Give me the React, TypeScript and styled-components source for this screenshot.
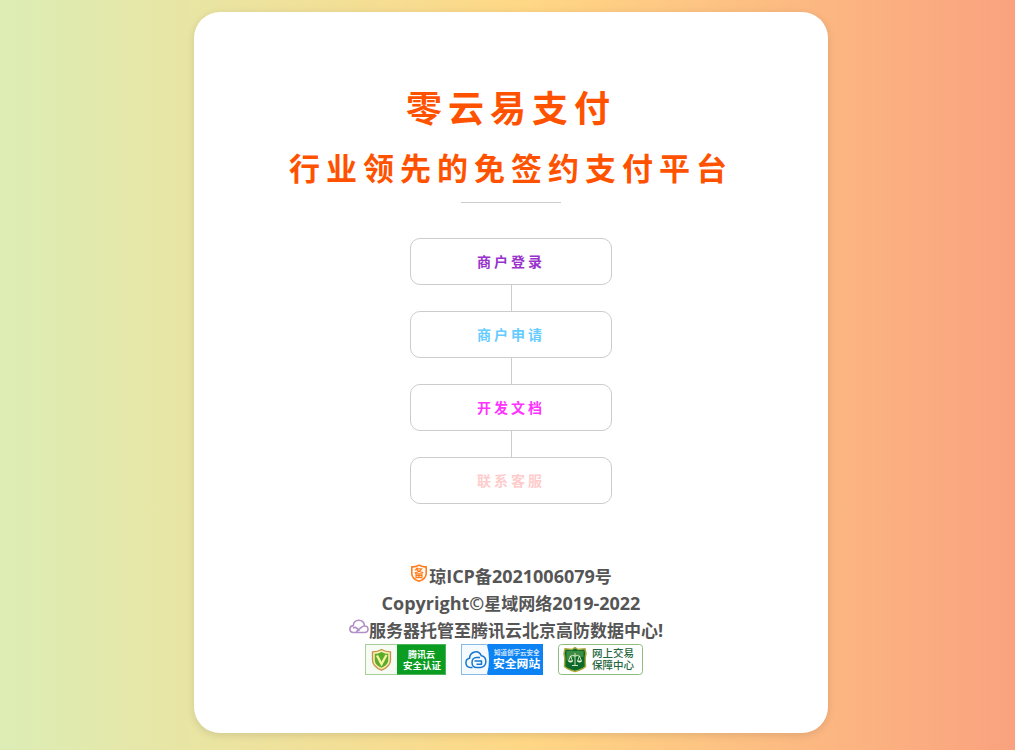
import React from "react";
import styled, { createGlobalStyle } from "styled-components";

const GlobalStyle = createGlobalStyle`
  * { box-sizing: border-box; }
  body {
    margin: 0;
    font-family: "Open Sans", "Noto Sans CJK SC", sans-serif;
    color: #555;
  }
`;

const Page = styled.div`
  min-height: 100vh;
  display: flex;
  justify-content: center;
  align-items: flex-start;
  padding: 12px 0 17px 7px;
  background: linear-gradient(to right, #dcedb5, #ffd785 52%, #faa27f);
`;

const Card = styled.main`
  width: 62.9%;
  padding: 70px 20px 58px;
  display: flex;
  flex-direction: column;
  align-items: center;
  background: #fff;
  border-radius: 26px;
  box-shadow: 0 2px 8px rgba(0, 0, 0, 0.12);
`;

const Title = styled.h1`
  margin: 0;
  font-size: 36px;
  line-height: 54px;
  letter-spacing: 6px;
  color: #ff5200;
`;

const Subtitle = styled.h2`
  margin: 8px 0 0;
  font-size: 31px;
  line-height: 48px;
  letter-spacing: 6px;
  color: #ff5200;
  white-space: nowrap;
`;

const Rule = styled.hr`
  width: 100px;
  height: 1px;
  margin: 10px 0 35px;
  border: 0;
  background: #ccc;
`;

const Menu = styled.nav`
  display: flex;
  flex-direction: column;
  align-items: center;
`;

const Connector = styled.span`
  width: 1px;
  height: 26px;
  background: #ccc;
`;

const MenuLink = styled.a<{ $color: string }>`
  width: 202px;
  display: block;
  padding: 12px 0;
  border: 1px solid #ccc;
  border-radius: 10px;
  color: ${(p) => p.$color};
  font-size: 14px;
  font-weight: 700;
  line-height: 21px;
  letter-spacing: 3px;
  text-align: center;
  text-decoration: none;
`;

const Footer = styled.footer`
  margin-top: 59px;
  display: flex;
  flex-direction: column;
  align-items: center;
  font-size: 17px;
  font-weight: 700;
  line-height: 27px;
`;

const Line = styled.div<{ $trail?: number }>`
  height: 27px;
  display: flex;
  padding-right: ${(p) => p.$trail ?? 0}px;
  white-space: nowrap;

  a { color: inherit; text-decoration: none; }
`;

const Latin = styled.span`
  font-size: 18px;
`;

const Badges = styled.div`
  display: flex;
`;

const Badge = styled.a`
  display: block;
  height: 31px;
  margin-right: 15px;
  svg { display: block; }
`;

const badgeFont = "'Liberation Sans', 'Noto Sans CJK SC', sans-serif";

const items = [
  { label: "商户登录", color: "#9932cc" },
  { label: "商户申请", color: "#66ccff" },
  { label: "开发文档", color: "#ff33ff" },
  { label: "联系客服", color: "#ffcccc" },
];

const FilingIcon = () => (
  <svg width="19" height="21" viewBox="0 -1 19 21" aria-hidden="true">
    <path d="M9 1.200C7 2.700 4.400 3 1.800 2.800V9.500c0 3.800 2.800 6.200 7.200 7.800 4.400-1.600 7.200-4 7.200-7.800V2.800C13.600 3 11 2.700 9 1.200Z" fill="#fff" stroke="#ff7d1a" strokeWidth="1.600" strokeLinejoin="round" />
    <path d="M7.500 3.700 5 6.300M7 4.800H11.800C10.500 7 8 8.200 4.600 8.800M6.500 5.700C8 7.400 10 8.300 13.300 8.700M6 9.800H12V13.600H6ZM6 11.700H12M9 9.800V13.600" fill="none" stroke="#ff7d1a" strokeWidth="1.200" />
  </svg>
);

const CloudIcon = () => (
  <svg width="20" height="18" viewBox="0 -2 20 18" aria-hidden="true">
    <path d="M4.300 6.600C2 6.800.9 8.300.9 10 .9 12.200 2.400 13.500 4.700 13.500H15.300C17.500 13.500 19 12 19 10.200 19 8.400 17.600 7 15.600 7 14.200 7 13.300 7.500 12.300 8.400L7.700 12.300M4.500 8.800C6 7.800 7 8.500 8 9.400L10 11.300M4.300 6.600C4.200 3.600 6.500 1.200 9.700 1.200 12.800 1.200 15.200 3.400 15.500 6.600" fill="none" stroke="#b18fc7" strokeWidth="1.600" strokeLinecap="round" strokeLinejoin="round" />
  </svg>
);

const TencentBadge = () => (
  <svg width="81" height="31" viewBox="0 0 81 31" role="img" aria-label="腾讯云安全认证">
    <rect width="81" height="31" fill="#0b9c22" />
    <rect x=".5" y=".5" width="80" height="30" fill="none" stroke="#4db35a" />
    <rect x="1" y="1" width="31" height="29" fill="#f6fbf3" />
    <path d="M0 .5H32M.5 0V31M0 30.500H32" stroke="#a8cf98" fill="none" />
    <path d="M16.500 5.500C13.500 7.300 10.500 7.800 7.500 7.800V16c0 5 3.500 8 9 10.200C22 24 25.500 21 25.500 16V7.800C22.500 7.800 19.500 7.300 16.500 5.500Z" fill="#f5edaa" stroke="#c6924b" strokeWidth="1.300" />
    <path d="M16.500 8C14 9.300 12 9.800 9.800 9.800V16c0 3.700 2.500 6 6.700 7.800 4.200-1.800 6.700-4.100 6.700-7.800V9.800C21 9.800 19 9.300 16.500 8Z" fill="#5bac2c" />
    <path d="m12 11.500 4.500 8.500L21.500 11" fill="none" stroke="#f6f59b" strokeWidth="2.300" />
    <g fill="#fff" fontFamily={badgeFont} fontWeight="700">
      <text x="43" y="14" fontSize="9">腾讯云</text>
      <text x="38" y="25" fontSize="9.500">安全认证</text>
    </g>
  </svg>
);

const SiteBadge = () => (
  <svg width="82" height="31" viewBox="0 0 82 31" role="img" aria-label="知道创宇云安全 安全网站">
    <rect width="82" height="31" fill="#0d83f3" />
    <path d="M1 1H26Q30 15 26 30H1Z" fill="#f5faff" />
    <path d="M0 .5H27M.5 0V31M0 30.500H27" stroke="#87b9e6" fill="none" />
    <path d="M11.500 23.500H9.500C3.500 23 3.600 15.200 8.600 14.200 9 6.800 18 5.600 20.300 11.800 26.500 12.800 26.500 23 19.500 23.500H15.500C9.500 23.500 9.500 13.500 15.500 13.500H19M13.500 17H20.500V20.200H15.500" fill="none" stroke="#1678cd" strokeWidth="1.500" strokeLinejoin="round" />
    <g fill="#fff" fontFamily={badgeFont} fontWeight="700">
      <text x="33" y="11" fontSize="6.500" fillOpacity=".8">知道创宇云安全</text>
      <text x="32" y="24" fontSize="11.800">安全网站</text>
    </g>
  </svg>
);

const TradeBadge = () => (
  <svg width="85" height="31" viewBox="0 0 85 31" role="img" aria-label="网上交易保障中心">
    <rect x=".5" y=".5" width="84" height="30" rx="3" fill="#fff" stroke="#90bd7b" />
    <path d="M17 3.500 14 5.500 7 4.800 6 9.500C7.500 14 6.500 18 6.500 22.500c3 3.500 7 3.500 10.500 5 3.500-1.500 7.500-1.500 10.500-5C27.500 18 26.500 14 28 9.500L27 4.800 20 5.500Z" fill="#0b6a2b" stroke="#a9a83a" strokeWidth="1.500" strokeLinejoin="round" />
    <path d="M8.500 7H25.500V13Q17 11 8.500 17Z" fill="#5aa552" opacity=".6" />
    <path d="M17 9V21M12 12.500Q14.500 10.500 17 12 19.500 10.500 22 12.500M12.500 12 10.500 17H14.500ZM21.500 12 19.500 17H23.500ZM14 21.500H20" fill="none" stroke="#e8eecb" strokeWidth=".9" />
    <path d="M10 17Q12.500 20 15 17ZM19 17Q21.500 20 24 17Z" fill="#f1f4d8" />
    <g fill="#25663c" fontFamily={badgeFont} fontWeight="500" fontSize="10.500">
      <text x="34" y="13">网上交易</text>
      <text x="34" y="25">保障中心</text>
    </g>
  </svg>
);

export default function App() {
  return (
    <Page>
      <GlobalStyle />
      <Card>
        <Title>零云易支付</Title>
        <Subtitle>行业领先的免签约支付平台</Subtitle>
        <Rule />
        <Menu>
          {items.map((item, i) => (
            <React.Fragment key={item.label}>
              {i > 0 && <Connector />}
              <MenuLink href="#" $color={item.color}>{item.label}</MenuLink>
            </React.Fragment>
          ))}
        </Menu>
        <Footer>
          <Line>
            <FilingIcon />
            <a href="#">琼<Latin>ICP</Latin>备<Latin>2021006079</Latin>号</a>
          </Line>
          <Line><span><Latin>Copyright©</Latin>星域网络<Latin>2019-2022</Latin></span></Line>
          <Line $trail={10}><CloudIcon />服务器托管至腾讯云北京高防数据中心<Latin>!</Latin></Line>
          <Badges>
            <Badge href="#"><TencentBadge /></Badge>
            <Badge href="#"><SiteBadge /></Badge>
            <Badge href="#"><TradeBadge /></Badge>
          </Badges>
        </Footer>
      </Card>
    </Page>
  );
}
